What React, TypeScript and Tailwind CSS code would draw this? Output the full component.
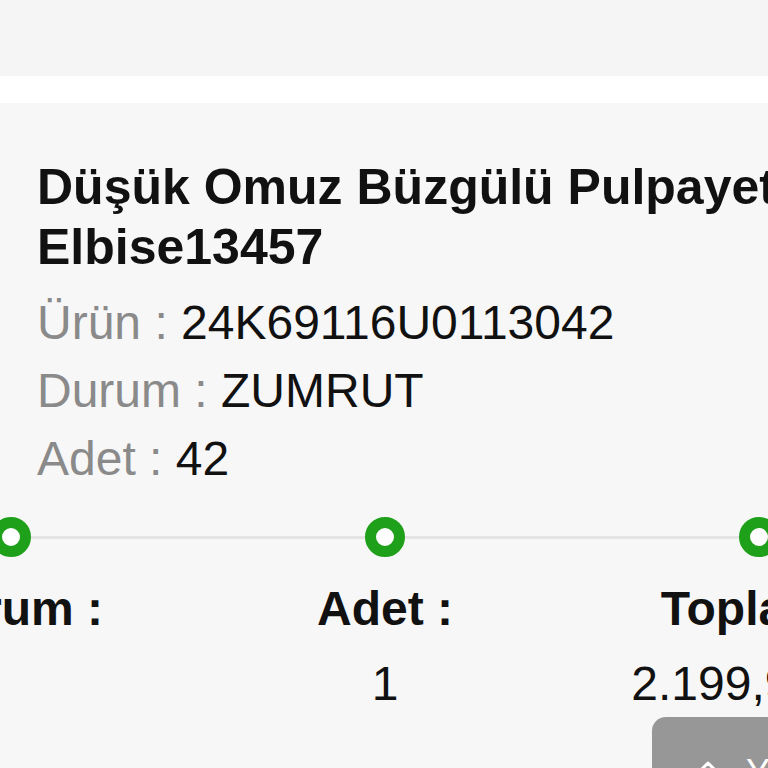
const steps = [
  { label: 'Durum :', value: '' },
  { label: 'Adet :', value: '1' },
  { label: 'Toplam :', value: '2.199,99 TL' },
];

const details = [
  { label: 'Ürün :', value: '24K69116U0113042' },
  { label: 'Durum :', value: 'ZUMRUT' },
  { label: 'Adet :', value: '42' },
];

const App = () => {
  return (
    <div
      className="relative w-[768px] h-[768px] overflow-hidden bg-[#f7f7f7] flex flex-col"
      style={{ fontFamily: '"Liberation Sans", Arial, sans-serif' }}
    >
      <div className="h-[76px] shrink-0 bg-[#f5f5f5]" />
      <div className="h-[27px] shrink-0 bg-white" />

      <div className="flex-1 bg-[#f7f7f7] pt-[54px]">
        <div className="pl-[37px]">
          <h1 className="w-[800px] text-[50px] leading-[60px] font-bold text-[#111]">
            Düşük Omuz Büzgülü Pulpayet Elbise13457
          </h1>
          <div className="mt-[12px]">
            {details.map(row => (
              <p key={row.label} className="text-[48px] leading-[68px] whitespace-nowrap">
                <span className="text-[#8a8a8a]">{row.label}</span>{' '}
                <span className="text-[#111]">{row.value}</span>
              </p>
            ))}
          </div>
        </div>

        <div className="-ml-[176px] w-[1122px] mt-[24px] grid grid-cols-3">
          {steps.map((step, i) => (
            <div key={step.label} className="flex flex-col items-center">
              <div className="w-full flex items-center">
                <div className={i === 0 ? 'flex-1 h-[3px]' : 'flex-1 h-[3px] bg-[#e4e4e4]'} />
                <div className="w-[40px] h-[40px] rounded-full border-[11px] border-[#1fa01a] bg-white" />
                <div className={i === 2 ? 'flex-1 h-[3px]' : 'flex-1 h-[3px] bg-[#e4e4e4]'} />
              </div>
              <div className="mt-[14px] text-[48px] leading-[75px] font-bold text-[#111] whitespace-nowrap">
                {step.label}
              </div>
              <div className="text-[48px] leading-[75px] text-[#111] whitespace-nowrap">
                {step.value || '\u00a0'}
              </div>
            </div>
          ))}
        </div>
      </div>

      <button className="absolute left-[652px] top-[717px] w-[220px] h-[100px] rounded-[14px] bg-[#979797] flex items-start gap-[28px] pl-[46px] pt-[36px] text-white">
        <svg width="20" height="14" viewBox="0 0 20 14" fill="none" className="mt-[6px]">
          <path d="M2 12 L10 4 L18 12" stroke="white" strokeWidth="3" strokeLinecap="round" strokeLinejoin="round" />
        </svg>
        <span className="text-[36px] leading-[40px]">Yukarı</span>
      </button>
    </div>
  );
};

export default App;
